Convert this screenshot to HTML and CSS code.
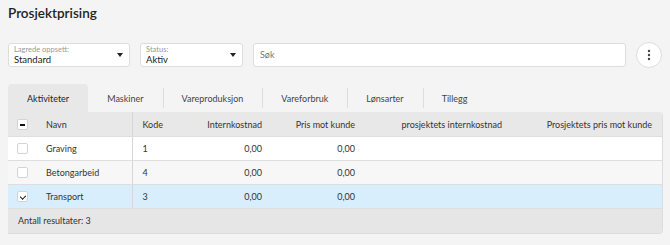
FILE: index.html
```html
<!DOCTYPE html>
<html lang="no">
<head>
  <meta charset="UTF-8" />
  <meta name="viewport" content="width=device-width, initial-scale=1.0"/>
  <title>Prosjektprising</title>
  <link rel="stylesheet" href="styles.css">
</head>
<body>

  <div class="page">
    <h1 class="title">Prosjektprising</h1>

    <div class="filters">
      <div class="select select-wide">
        <div class="select-text">
          <span class="select-label">Lagrede oppsett:</span>
          <span class="select-value">Standard</span>
        </div>
        <span class="caret"></span>
      </div>
      <div class="select select-narrow">
        <div class="select-text">
          <span class="select-label">Status:</span>
          <span class="select-value">Aktiv</span>
        </div>
        <span class="caret"></span>
      </div>
      <div class="search">Søk</div>
      <button class="more-btn" type="button">
        <svg width="4" height="12" viewBox="0 0 4 12">
          <circle cx="2" cy="2" r="1.2" fill="#444"/>
          <circle cx="2" cy="6" r="1.2" fill="#444"/>
          <circle cx="2" cy="10" r="1.2" fill="#444"/>
        </svg>
      </button>
    </div>

    <div class="tabs">
      <a class="tab active">Aktiviteter</a>
      <a class="tab">Maskiner</a>
      <a class="tab sep">Vareproduksjon</a>
      <a class="tab sep">Vareforbruk</a>
      <a class="tab sep">Lønsarter</a>
      <a class="tab sep">Tillegg</a>
    </div>

    <div class="grid">
      <table>
        <colgroup>
          <col class="c-check">
          <col class="c-name">
          <col class="c-code">
          <col class="c-cost">
          <col class="c-price">
          <col class="c-pcost">
          <col class="c-pprice">
        </colgroup>
        <thead>
          <tr>
            <th><span class="box box-minus"></span></th>
            <th class="frozen">Navn</th>
            <th>Kode</th>
            <th class="num">Internkostnad</th>
            <th class="num">Pris mot kunde</th>
            <th class="num">prosjektets internkostnad</th>
            <th class="num">Prosjektets pris mot kunde</th>
          </tr>
        </thead>
        <tbody>
          <tr>
            <td><span class="box"></span></td>
            <td class="frozen">Graving</td>
            <td>1</td>
            <td class="num">0,00</td>
            <td class="num">0,00</td>
            <td></td>
            <td></td>
          </tr>
          <tr class="alt">
            <td><span class="box"></span></td>
            <td class="frozen">Betongarbeid</td>
            <td>4</td>
            <td class="num">0,00</td>
            <td class="num">0,00</td>
            <td></td>
            <td></td>
          </tr>
          <tr class="selected">
            <td><span class="box box-checked"></span></td>
            <td class="frozen">Transport</td>
            <td>3</td>
            <td class="num">0,00</td>
            <td class="num">0,00</td>
            <td></td>
            <td></td>
          </tr>
        </tbody>
      </table>
      <div class="grid-footer">Antall resultater: 3</div>
    </div>
  </div>

</body>
</html>
```

FILE: styles.css
```css
body {
  background-color: #f4f4f4;
  font-family: Lato, "Liberation Sans", sans-serif;
  font-size: 9px;
  color: #333;
  margin: 0;
}
.page {
  padding: 5px 8px 0 8px;
}
.title {
  font-size: 13.5px;
  font-weight: 600;
  line-height: 16px;
  margin: 0;
  color: #222;
}
.filters {
  display: flex;
  align-items: center;
  gap: 10px;
  margin-top: 21px;
}
.select {
  display: flex;
  align-items: center;
  justify-content: space-between;
  height: 24px;
  box-sizing: border-box;
  background: white;
  border: 1px solid #ddd;
  border-radius: 3px;
  padding: 0 6px 0 5px;
}
.select-wide {
  width: 122px;
}
.select-narrow {
  width: 103px;
}
.select-text {
  display: flex;
  flex-direction: column;
}
.select-label {
  font-size: 7.5px;
  line-height: 8px;
  color: #999;
}
.select-value {
  font-size: 9.5px;
  line-height: 11px;
  color: #222;
}
.caret {
  width: 0;
  height: 0;
  border-left: 3.5px solid transparent;
  border-right: 3.5px solid transparent;
  border-top: 4px solid #222;
}
.search {
  flex: 1;
  height: 24px;
  box-sizing: border-box;
  background: white;
  border: 1px solid #ddd;
  border-radius: 3px;
  padding: 0 6px;
  line-height: 22px;
  color: #777;
}
.more-btn {
  width: 26px;
  height: 26px;
  border-radius: 50%;
  border: 1px solid #ddd;
  background: white;
  padding: 0;
  display: flex;
  align-items: center;
  justify-content: center;
}
.tabs {
  display: flex;
  margin-top: 16px;
  height: 28px;
}
.tab {
  position: relative;
  display: flex;
  align-items: center;
  padding: 0 19px;
  color: #444;
  border-radius: 4px 4px 0 0;
}
.tab.active {
  background-color: #e8e8e8;
  color: #222;
}
.tab.sep::before {
  content: "";
  position: absolute;
  left: 0;
  top: 4px;
  bottom: 4px;
  border-left: 1px solid #ddd;
}
.grid {
  width: 654px;
  border-right: 1px solid #ddd;
  border-bottom: 1px solid #ddd;
  border-radius: 0 4px 4px 0;
  overflow: hidden;
  background: white;
}
table {
  width: 100%;
  border-collapse: collapse;
  table-layout: fixed;
}
.c-check { width: 28px; }
.c-name { width: 96px; }
.c-code { width: 58px; }
.c-cost { width: 82px; }
.c-price { width: 93px; }
.c-pcost { width: 147px; }
.c-pprice { width: 150px; }
th, td {
  text-align: left;
  padding: 0 10px;
  white-space: nowrap;
  border-bottom: 1px solid #dedede;
}
th {
  background-color: #e8e8e8;
  font-weight: normal;
  color: #333;
  height: 24px;
}
td {
  height: 23px;
}
th:first-child, td:first-child {
  padding: 0 0 0 9px;
}
.frozen {
  border-right: 1px solid #d6d6d6;
}
th.frozen, td.frozen {
  padding-left: 10px;
}
.num {
  text-align: right;
}
tr.alt td {
  background-color: #f7f7f7;
}
tr.selected td {
  background-color: #d9eefc;
}
.box {
  display: block;
  width: 11px;
  height: 11px;
  box-sizing: border-box;
  background: white;
  border: 1px solid #d4d4d4;
  border-radius: 2px;
  position: relative;
}
.box-minus::after {
  content: "";
  position: absolute;
  left: 2px;
  right: 2px;
  top: 4px;
  height: 2px;
  background: #111;
}
.box-checked::after {
  content: "";
  position: absolute;
  left: 3px;
  top: 1.5px;
  width: 2.5px;
  height: 4px;
  border-right: 1.5px solid #111;
  border-bottom: 1.5px solid #111;
  transform: rotate(45deg);
}
.grid-footer {
  background-color: #e6e6e6;
  height: 24px;
  line-height: 24px;
  padding: 0 10px;
}
```
